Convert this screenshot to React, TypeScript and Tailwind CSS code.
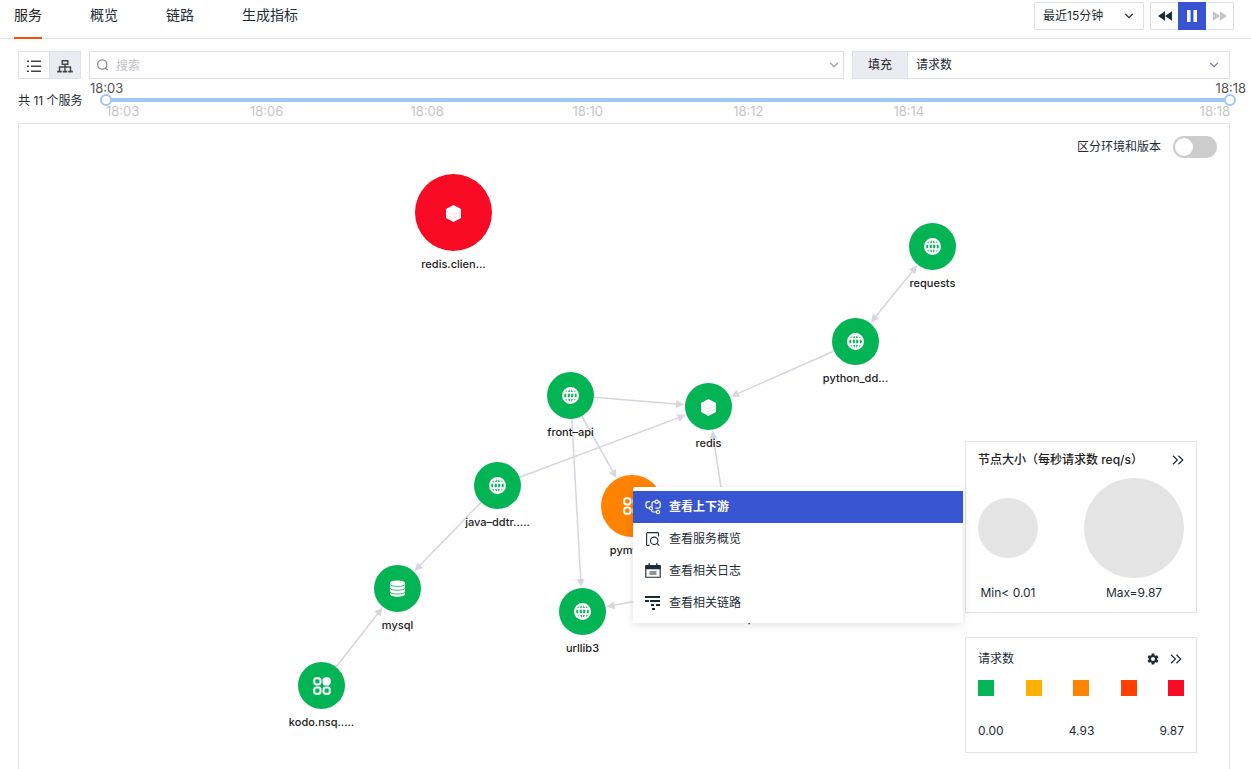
import React from 'react';

type IconKind = 'globe' | 'layers' | 'database' | 'grid';

interface ServiceNode {
  id: string;
  label: string;
  left: number;
  top: number;
  size: number;
  tone: 'ok' | 'warn' | 'bad';
  icon: IconKind;
}

const nodes: ServiceNode[] = [
  { id: 'redis-client', label: 'redis.clien...', left: 396, top: 50, size: 77, tone: 'bad', icon: 'layers' },
  { id: 'requests', label: 'requests', left: 890, top: 99, size: 47, tone: 'ok', icon: 'globe' },
  { id: 'python', label: 'python_dd...', left: 813, top: 194, size: 47, tone: 'ok', icon: 'globe' },
  { id: 'redis', label: 'redis', left: 666, top: 259, size: 47, tone: 'ok', icon: 'layers' },
  { id: 'front', label: 'front–api', left: 528, top: 248, size: 47, tone: 'ok', icon: 'globe' },
  { id: 'java', label: 'java–ddtr.....', left: 455, top: 338, size: 47, tone: 'ok', icon: 'globe' },
  { id: 'pymysql', label: 'pymysql', left: 582, top: 351, size: 62, tone: 'warn', icon: 'grid' },
  { id: 'mysql', label: 'mysql', left: 355, top: 441, size: 47, tone: 'ok', icon: 'database' },
  { id: 'urllib3', label: 'urllib3', left: 540, top: 464, size: 47, tone: 'ok', icon: 'globe' },
  { id: 'kodo', label: 'kodo.nsq.....', left: 279, top: 538, size: 47, tone: 'ok', icon: 'grid' },
  { id: 'webapp', label: 'web–api', left: 693, top: 434, size: 47, tone: 'ok', icon: 'globe' },
];

const edges: { from: string; to: string; both?: boolean }[] = [
  { from: 'python', to: 'requests', both: true },
  { from: 'python', to: 'redis' },
  { from: 'front', to: 'redis' },
  { from: 'front', to: 'pymysql' },
  { from: 'front', to: 'urllib3' },
  { from: 'java', to: 'redis' },
  { from: 'java', to: 'mysql' },
  { from: 'kodo', to: 'mysql' },
  { from: 'webapp', to: 'redis' },
  { from: 'webapp', to: 'urllib3' },
];

const toneBg = { ok: 'bg-[#02b453] text-[#02b453]', warn: 'bg-[#ff8200] text-[#ff8200]', bad: 'bg-[#f80a24] text-[#f80a24]' };

function NodeIcon({ kind }: { kind: IconKind }) {
  if (kind === 'globe')
    return (
      <svg width="17" height="17" viewBox="0 0 17 17" fill="none" stroke="#fff">
        <circle cx="8.5" cy="8.5" r="7.4" strokeWidth="2.2" />
        <ellipse cx="8.5" cy="8.5" rx="3.6" ry="7.5" strokeWidth="1.6" />
        <path d="M8.5 1v15" strokeWidth="1.4" />
        <path d="M1.800 5.800h13.400M1.800 11.200h13.400" strokeWidth="1.800" />
      </svg>
    );
  if (kind === 'layers')
    return (
      <svg width="17" height="17" viewBox="0 0 17 17" className="translate-y-px">
        <path d="M8.5 0 16 4v9l-7.5 4L1 13V4z" fill="#fff" />
        <path d="M1 6.600l7.500 3.400L16 6.600M1 9.800l7.500 3.400 7.500-3.400" fill="none" stroke="currentColor" strokeWidth=".5" opacity=".25" />
      </svg>
    );
  if (kind === 'database')
    return (
      <svg width="17" height="17" viewBox="0 0 17 17">
        <path d="M1 3c0-3.3 15-3.3 15 0v11c0 3.6-15 3.6-15 0z" fill="#fff" />
        <path d="M1 4.4c1 2.7 14 2.7 15 0M1 8.2c1 2.7 14 2.7 15 0M1 12c1 2.7 14 2.7 15 0" fill="none" stroke="currentColor" strokeWidth=".8" />
      </svg>
    );
  return (
    <svg width="18" height="18" viewBox="0 0 18 18" fill="none" stroke="#fff" strokeWidth="2">
      <rect x="1.2" y="1.200" width="6.300" height="6.300" rx="2.400" />
      <rect x="10.500" y="1.200" width="6.300" height="6.300" rx="2.600" fill="#fff" />
      <rect x="1.200" y="10.500" width="6.300" height="6.300" rx="2.400" />
      <rect x="10.500" y="10.500" width="6.300" height="6.300" rx="2.400" />
    </svg>
  );
}

function Arrow({ x, y, angle }: { x: number; y: number; angle: number }) {
  return <path d="M0 0 -8 -4 -8 4z" fill="#d6d5e0" transform={`translate(${x} ${y}) rotate(${angle})`} />;
}

function Edges() {
  const find = (id: string) => nodes.find((n) => n.id === id)!;
  return (
    <svg className="pointer-events-none absolute inset-0 h-full w-full" aria-hidden="true">
      {edges.map((e) => {
        const a = find(e.from);
        const b = find(e.to);
        const ax = a.left + a.size / 2;
        const ay = a.top + a.size / 2;
        const bx = b.left + b.size / 2;
        const by = b.top + b.size / 2;
        const d = Math.hypot(bx - ax, by - ay);
        const ux = (bx - ax) / d;
        const uy = (by - ay) / d;
        const start = a.size / 2 + (e.both ? 1 : 0);
        const end = b.size / 2 + 1;
        const x1 = ax + ux * start;
        const y1 = ay + uy * start;
        const x2 = bx - ux * end;
        const y2 = by - uy * end;
        const angle = (Math.atan2(uy, ux) * 180) / Math.PI;
        const inset = e.both ? 5 : 0;
        return (
          <g key={e.from + e.to}>
            <line
              x1={x1 + ux * inset}
              y1={y1 + uy * inset}
              x2={x2 - ux * 5}
              y2={y2 - uy * 5}
              stroke="#d6d5e0"
              strokeWidth="1.5"
            />
            <Arrow x={x2} y={y2} angle={angle} />
            {e.both && <Arrow x={x1} y={y1} angle={angle + 180} />}
          </g>
        );
      })}
    </svg>
  );
}

function Chevron({ className = '' }: { className?: string }) {
  return (
    <svg width="10" height="6" viewBox="0 0 10 6" fill="none" stroke="currentColor" strokeWidth="1.2" className={className}>
      <path d="M1.300 1 5 4.700 8.700 1" />
    </svg>
  );
}

function DoubleChevron() {
  return (
    <svg width="12" height="10" viewBox="0 0 12 10" fill="none" stroke="currentColor" strokeWidth="1.2">
      <path d="M1 .7 5.4 5 1 9.3M6.4.7 10.8 5 6.4 9.3" />
    </svg>
  );
}

const tabs = ['服务', '概览', '链路', '生成指标'];

function Header() {
  return (
    <header className="flex h-[39px] items-start justify-between border-b border-[#e3e3ea] pr-[17px] pl-3.5">
      <nav className="flex gap-12 text-sm">
        {tabs.map((t, i) => (
          <a
            key={t}
            href="#"
            className={
              i === 0
                ? 'h-[39px] border-b-2 border-[#ff4d00] leading-[30px] text-[#222]'
                : 'h-[39px] leading-[30px]'
            }
          >
            {t}
          </a>
        ))}
      </nav>
      <div className="flex gap-1.5 pt-0.5">
        <div className="relative flex items-center">
          <select aria-label="时间范围" className="h-7 w-[110px] appearance-none rounded-xs border border-[#dfe0e8] bg-white pl-2">
            <option>最近15分钟</option>
          </select>
          <Chevron className="pointer-events-none absolute right-2.5" />
        </div>
        <div className="flex h-7 rounded-xs border border-[#dfe0e8]">
          <button aria-label="后退" className="flex w-[27px] items-center justify-center">
            <svg width="14" height="10" viewBox="0 0 14 10" fill="currentColor">
              <path d="M7 .3v9.4L0 5zM14 .3v9.4L7 5z" />
            </svg>
          </button>
          <button aria-label="暂停" className="-my-px flex w-7 items-center justify-center bg-[#3754d1] text-white">
            <svg width="10" height="12" viewBox="0 0 10 12" fill="currentColor">
              <path d="M0 0h3.5v12H0zM6.5 0H10v12H6.5z" />
            </svg>
          </button>
          <button aria-label="前进" className="flex w-[27px] items-center justify-center text-[#c4c5ce]">
            <svg width="14" height="10" viewBox="0 0 14 10" fill="currentColor">
              <path d="M0 .3v9.4L7 5zM7 .3v9.4L14 5z" />
            </svg>
          </button>
        </div>
      </div>
    </header>
  );
}

function Toolbar() {
  return (
    <div className="flex h-7 gap-2">
      <div className="flex border border-[#dfe0e8] text-[#444]">
        <button aria-label="列表" className="flex w-[30px] items-center justify-center">
          <svg width="14" height="13" viewBox="0 0 14 13" fill="currentColor" className="translate-y-px">
            <path d="M0 .5h2v1.600H0zM4 .5h10v1.600H4zM0 5.500h2v1.600H0zM4 5.500h10v1.600H4zM0 10.500h2v1.600H0zM4 10.500h10v1.600H4z" />
          </svg>
        </button>
        <button aria-label="拓扑图" className="flex w-[31px] items-center justify-center border-l border-[#dfe0e8] bg-[#ebecf1]">
          <svg width="16" height="13" viewBox="0 0 16 13" fill="none" stroke="currentColor" strokeWidth="1.4" className="translate-y-px">
            <path d="M5.200.7h5.600v3.600H5.200zM8 4.300v7M2.500 11.500V7h11v4.500" />
            <path d="M.2 11.600h4.600M5.700 11.600h4.600M11.200 11.600h4.600" strokeWidth="1.800" />
          </svg>
        </button>
      </div>
      <div className="flex min-w-0 flex-1 items-center border border-[#dfe0e8] px-[7px]">
        <svg width="12" height="12" viewBox="0 0 12 12" fill="none" stroke="#888" strokeWidth="1.300">
          <circle cx="5.300" cy="5.500" r="4.600" />
          <path d="M8.400 8.800l2.200 2.200" />
        </svg>
        <input
          aria-label="搜索"
          placeholder="搜索"
          className="ml-[7px] h-full min-w-0 flex-1 bg-transparent outline-none placeholder:text-[#bfbfc8]"
        />
        <Chevron className="-mr-[3px] text-[#999]" />
      </div>
      <div className="relative flex w-[378px] items-center border border-[#dfe0e8]">
        <label htmlFor="fill" className="flex h-full w-[55px] items-center justify-center border-r border-[#dfe0e8] bg-[#ebecf1] text-[#222]">
          填充
        </label>
        <select id="fill" className="h-full min-w-0 flex-1 appearance-none bg-white pl-2">
          <option>请求数</option>
        </select>
        <Chevron className="pointer-events-none absolute right-2.5 text-[#777a90]" />
      </div>
    </div>
  );
}

const ticks = ['18:06', '18:08', '18:10', '18:12', '18:14'];
const thumb =
  'pointer-events-none absolute -inset-x-1.5 top-[15px] h-3 appearance-none bg-transparent [&::-webkit-slider-thumb]:pointer-events-auto [&::-webkit-slider-thumb]:size-3 [&::-webkit-slider-thumb]:appearance-none [&::-webkit-slider-thumb]:rounded-full [&::-webkit-slider-thumb]:border-2 [&::-webkit-slider-thumb]:border-[#9ec7f5] [&::-webkit-slider-thumb]:bg-white';

function TimeRange() {
  return (
    <div className="flex h-11">
      <p className="w-[88px] shrink-0 pt-3.5 leading-4 whitespace-nowrap">共 11 个服务</p>
      <div className="relative min-w-0 flex-1 text-[13px] text-[#c6c6c6]">
        <div className="-mx-4 flex justify-between pt-px leading-4 text-[#555]">
          <span>18:03</span>
          <span>18:18</span>
        </div>
        <div className="mt-0.5 h-1 bg-[#9ec7f5]" />
        <div className="flex justify-between leading-[18px]">
          <span>18:03</span>
          <span>18:18</span>
        </div>
        {ticks.map((t, i) => (
          <span key={t} className="absolute top-[23px] -translate-x-1/2 leading-[18px]" style={{ left: `${((i + 1) * 100) / 7}%` }}>
            {t}
          </span>
        ))}
        <input type="range" aria-label="开始时间" min={0} max={15} defaultValue={0} className={`${thumb} w-[calc(100%+12px)]`} />
        <input type="range" aria-label="结束时间" min={0} max={15} defaultValue={15} className={`${thumb} w-[calc(100%+12px)]`} />
      </div>
    </div>
  );
}

const menuItems = [
  {
    text: '查看上下游',
    icon: (
      <g fill="none" stroke="currentColor" strokeWidth="1.2">
        <path d="M4.800 2.600H3.200A2.200 2.200 0 0 0 1 4.800v2a2.200 2.200 0 0 0 2.200 2.200h1M7 7.500V4.600a2 2 0 0 1 2-2h.800M13.600 2.600a1.600 1.600 0 0 1 1.600 1.600v3.200a1.800 1.800 0 0 1-1.800 1.800h-3M6.600 10.700v.6a1.700 1.700 0 0 0 1.700 1.700h3" />
        <circle cx="5.900" cy="9.200" r="1.500" />
        <circle cx="11.700" cy="2.800" r="1.600" />
        <circle cx="13" cy="13" r="1.600" />
      </g>
    ),
  },
  {
    text: '查看服务概览',
    icon: (
      <g fill="none" stroke="currentColor" strokeWidth="1.1">
        <path d="M4.500 14.400H2.600a1 1 0 0 1-1-1V2.600a1 1 0 0 1 1-1h10.300a.6.6 0 0 1 .6.6v3.400" />
        <circle cx="9.200" cy="9.800" r="3.700" />
        <path d="M11.900 12.400l2.500 2.200" />
      </g>
    ),
  },
  {
    text: '查看相关日志',
    icon: (
      <g>
        <path d="M.800 3v11.300h14.400V3M4.500 9h7M4.500 11h7" fill="none" stroke="currentColor" strokeWidth="1.1" />
        <path d="M.300 2h15.400v4.200H.300zM3.500.3h1.400v3H3.500zM11.100.3h1.400v3h-1.400z" fill="currentColor" />
      </g>
    ),
  },
  {
    text: '查看相关链路',
    icon: <path d="M0 1h15v2H0zM0 5h4v2H0zM5 5h10v2H5zM6 9h3v2H6zM11 9h4v2h-4zM7 13h3v2H7z" fill="currentColor" />,
  },
];

function ContextMenu() {
  return (
    <ul role="menu" className="absolute top-[363px] left-[614px] w-[330px] rounded-xs bg-white py-1 shadow-[0_2px_8px_rgba(0,0,0,0.12)]">
      {menuItems.map((m, i) => (
        <li key={m.text} role="none">
          <button
            role="menuitem"
            className={
              i === 0
                ? 'flex h-8 w-full items-center gap-2 bg-[#3754d1] px-3 font-bold text-white'
                : 'flex h-8 w-full items-center gap-2 px-3'
            }
          >
            <svg width="16" height="16" viewBox="0 0 16 16">
              {m.icon}
            </svg>
            {m.text}
          </button>
        </li>
      ))}
    </ul>
  );
}

function Legends() {
  return (
    <div className="absolute top-[317px] right-8 flex w-[232px] flex-col gap-6">
      <section className="h-[172px] border border-[#e3e3ea] bg-white px-3 pt-2">
        <div className="flex h-5 items-center justify-between">
          <h2 className="font-medium text-[#222]">节点大小（每秒请求数 req/s）</h2>
          <button aria-label="收起节点大小">
            <DoubleChevron />
          </button>
        </div>
        <div className="mt-2 flex items-center justify-between">
          <div className="size-[60px] rounded-full bg-[#e4e4e4]" />
          <div className="size-[100px] rounded-full bg-[#e4e4e4]" />
        </div>
        <div className="mt-1.5 flex justify-between leading-[18px]">
          <span className="w-[60px] text-center">Min&lt; 0.01</span>
          <span className="w-[100px] text-center">Max=9.87</span>
        </div>
      </section>
      <section className="h-[116px] border border-[#e3e3ea] bg-white px-3 pt-[11px]">
        <div className="flex h-5 items-center justify-between">
          <h2>请求数</h2>
          <div className="flex items-center gap-[11px] pr-0.5">
            <button aria-label="设置">
              <svg width="12" height="12" viewBox="0 0 24 24" fill="currentColor">
                <path
                  fillRule="evenodd"
                  d="M9.5 1h5l.7 3.3 2 1.1 3.2-1 2.5 4.3-2.5 2.2v2.2l2.5 2.2-2.5 4.3-3.2-1-2 1.1-.7 3.300h-5l-.7-3.300-2-1.100-3.200 1-2.500-4.300 2.500-2.200v-2.200L1.100 8.700l2.500-4.300 3.200 1 2-1.100zM12 8a4 4 0 1 0 0 8 4 4 0 0 0 0-8z"
                />
              </svg>
            </button>
            <button aria-label="收起请求数">
              <DoubleChevron />
            </button>
          </div>
        </div>
        <div className="mt-[11px] flex justify-between">
          <span className="size-4 bg-[#02b453]" />
          <span className="size-4 bg-[#ffb000]" />
          <span className="size-4 bg-[#ff8200]" />
          <span className="size-4 bg-[#ff4000]" />
          <span className="size-4 bg-[#f80a24]" />
        </div>
        <div className="mt-[26px] flex justify-between leading-[18px]">
          <span>0.00</span>
          <span>4.93</span>
          <span>9.87</span>
        </div>
      </section>
    </div>
  );
}

export default function App() {
  return (
    <div className="flex h-screen min-h-[640px] flex-col overflow-hidden bg-white font-['Inter','Noto_Sans_CJK_SC',sans-serif] text-xs text-[#1c2d36]">
      <Header />
      <main className="flex min-h-0 flex-1 flex-col pt-3 pr-[21px] pl-[18px]">
        <Toolbar />
        <TimeRange />
        <div className="relative min-h-0 flex-1 border border-b-0 border-[#e3e3ea]">
          <Edges />
          {nodes.map((n) => (
            <div
              key={n.id}
              className="absolute flex flex-col items-center gap-1.5 text-[11px] leading-[14px] font-medium text-[#222]"
              style={{ left: n.left, top: n.top, width: n.size }}
            >
              <div
                className={`flex w-full shrink-0 items-center justify-center rounded-full ${toneBg[n.tone]}`}
                style={{ height: n.size }}
              >
                <NodeIcon kind={n.icon} />
              </div>
              <span className="whitespace-nowrap">{n.label}</span>
            </div>
          ))}
          <label className="absolute top-3 right-3 flex items-center gap-3">
            区分环境和版本
            <input
              type="checkbox"
              role="switch"
              className="h-[22px] w-11 appearance-none rounded-full bg-[#ccc] p-0.5 before:block before:size-[18px] before:rounded-full before:bg-white checked:bg-[#3754d1] checked:before:translate-x-[22px]"
            />
          </label>
          <Legends />
          <ContextMenu />
        </div>
      </main>
    </div>
  );
}
